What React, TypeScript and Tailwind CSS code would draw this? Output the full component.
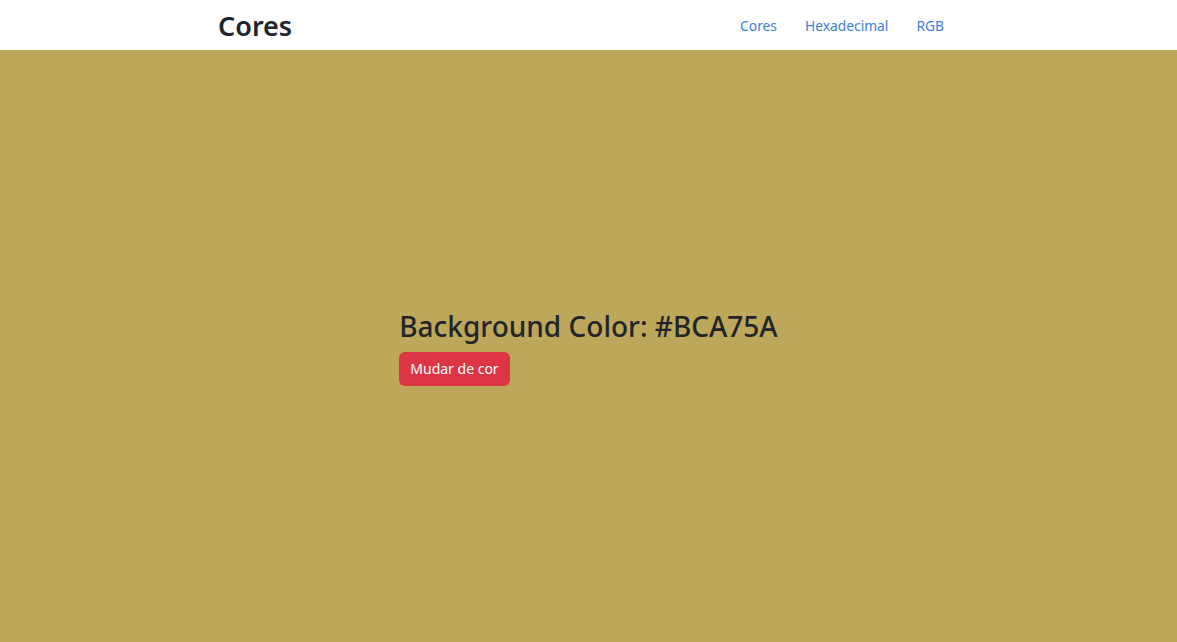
export default function App() {
  return (
    <div className="flex min-h-screen flex-col bg-[#BCA75A] font-['Noto_Sans',sans-serif] text-[#212529]">
      <nav className="h-[50px] bg-white">
        <div className="ml-[218px] flex h-full w-[726px] items-center justify-between">
          <a className="text-[27px] font-semibold leading-none">Cores</a>
          <ul className="flex items-center gap-[28px] pt-[2px] text-[13.8px] text-[#3d7fd4]">
            <li>Cores</li>
            <li>Hexadecimal</li>
            <li>RGB</li>
          </ul>
        </div>
      </nav>
      <main className="flex flex-1 items-center justify-center">
        <div className="mt-[4px] flex flex-col items-start">
          <h2 className="text-[28px] font-medium leading-[1.2]">Background Color: #BCA75A</h2>
          <button className="mt-[8px] h-[34px] rounded-[6px] bg-[#dc3545] px-[11px] text-[14px] text-white">
            Mudar de cor
          </button>
        </div>
      </main>
    </div>
  );
}
